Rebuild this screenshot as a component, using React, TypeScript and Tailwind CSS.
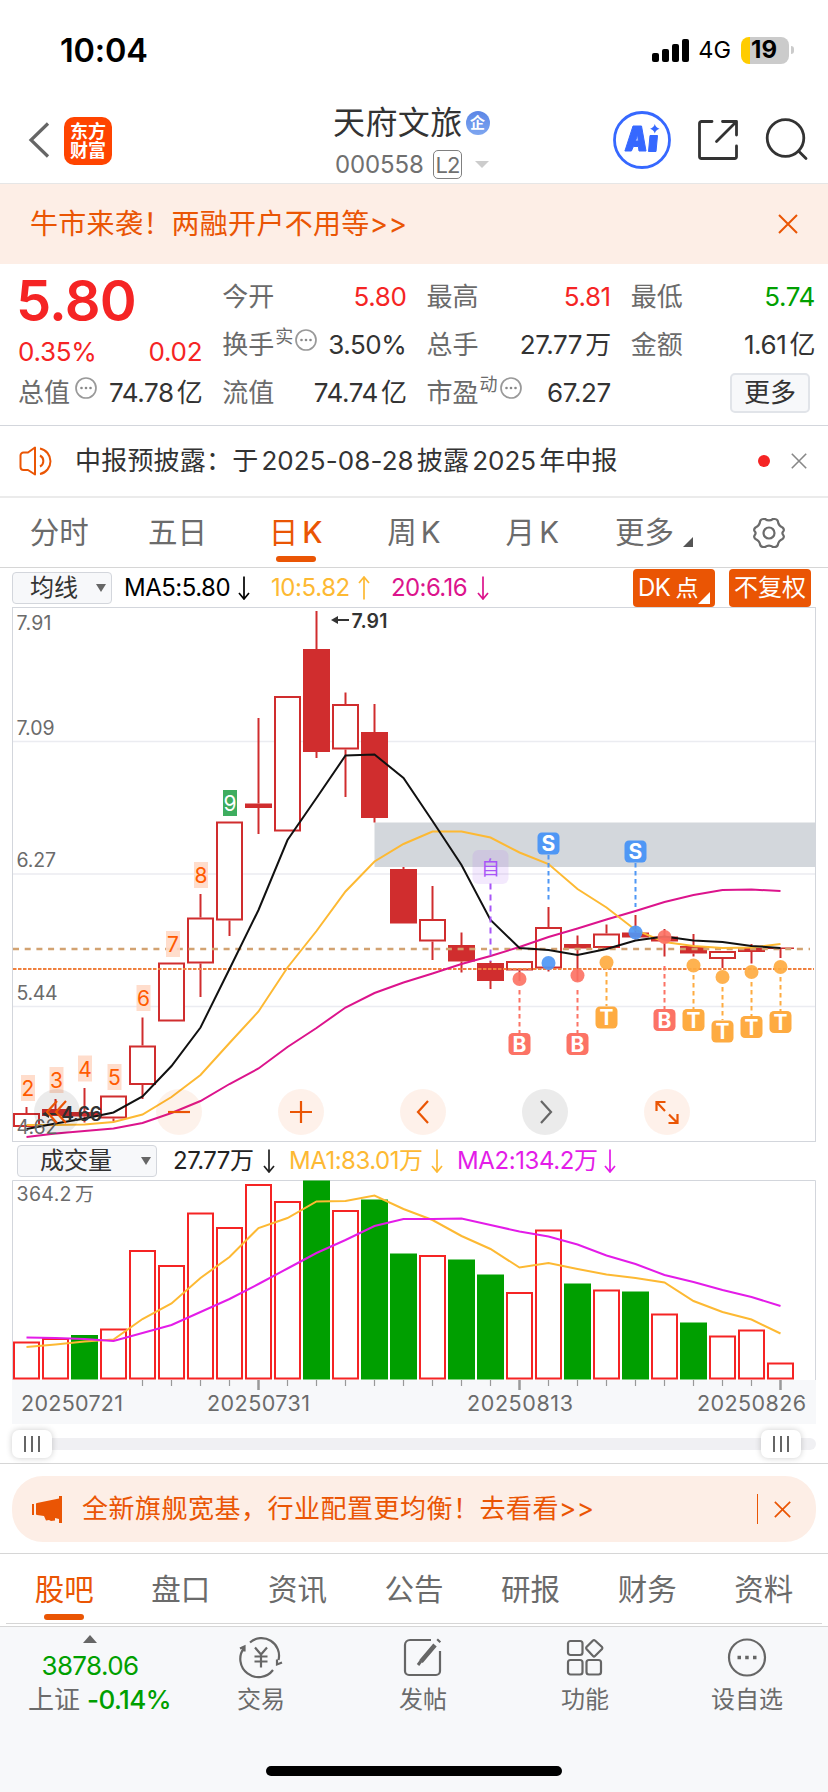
import React from 'react';

type Candle = {
  high: number;
  top: number;
  bottom: number;
  low: number;
  solid?: boolean;
};

const STEP = 29;
const FIRST_X = 14.5;
const xAt = (i: number) => FIRST_X + i * STEP;

// All chart values are in the chart's own pixel space
const candles: Candle[] = [
  { high: 500, top: 506, bottom: 520, low: 520 },
  { high: 492, top: 502, bottom: 509, low: 509, solid: true },
  { high: 481, top: 505, bottom: 509.5, low: 515.5, solid: true },
  { high: 488.5, top: 488.5, bottom: 511.5, low: 514.5 },
  { high: 410.5, top: 438.5, bottom: 478, low: 492 },
  { high: 355.5, top: 355.5, bottom: 414.5, low: 414.5 },
  { high: 287, top: 310.5, bottom: 356.5, low: 390 },
  { high: 214.5, top: 214.5, bottom: 313.5, low: 329 },
  { high: 111, top: 196.5, bottom: 201, low: 227, solid: true },
  { high: 89, top: 89, bottom: 224.5, low: 224.5 },
  { high: 4, top: 42, bottom: 145, low: 151, solid: true },
  { high: 85.5, top: 97, bottom: 142.5, low: 190 },
  { high: 97, top: 125, bottom: 211, low: 215.5, solid: true },
  { high: 260, top: 262, bottom: 316.5, low: 316.5, solid: true },
  { high: 279, top: 312, bottom: 334.5, low: 353 },
  { high: 325.5, top: 338, bottom: 354.5, low: 365.5, solid: true },
  { high: 354, top: 356, bottom: 374, low: 382, solid: true },
  { high: 354, top: 354, bottom: 363.5, low: 374 },
  { high: 300, top: 320, bottom: 361.5, low: 364.5 },
  { high: 328.5, top: 337, bottom: 341.5, low: 374, solid: true },
  { high: 317.5, top: 326.5, bottom: 341, low: 341 },
  { high: 308, top: 325.5, bottom: 330.5, low: 332.5, solid: true },
  { high: 322, top: 329.5, bottom: 334.5, low: 349.5, solid: true },
  { high: 327, top: 339, bottom: 346.5, low: 349.5, solid: true },
  { high: 344, top: 344, bottom: 352, low: 361 },
  { high: 337, top: 341, bottom: 345, low: 356.5, solid: true },
  { high: 340.5, top: 340.5, bottom: 342, low: 351, solid: true },
];

const ma5 = [522, 516.5, 511.5, 505.5, 489.5, 459, 420.5, 362, 303, 233, 191, 148.5, 147.5, 171, 214, 258, 313, 341, 343, 348, 342, 333.5, 329.5, 333.5, 335, 339, 341];
const ma10 = [518, 518, 517.5, 515, 507.5, 490, 468, 436, 404.5, 360.5, 324, 284.5, 254.5, 237, 224.5, 224.5, 230.5, 245.5, 257, 282, 300.5, 323, 335, 339, 341, 340.5, 337];
const ma20 = [530, 526.5, 524, 521.5, 516, 506, 494, 477, 461.5, 440, 421, 400.5, 386, 375.5, 366.5, 357, 349, 340, 330, 321.5, 312.5, 304, 295, 288, 283, 282.5, 284];

const counts = [
  { n: '2', x: 16, y: 468 },
  { n: '3', x: 44.5, y: 460 },
  { n: '4', x: 73, y: 448.5 },
  { n: '5', x: 102.5, y: 457 },
  { n: '6', x: 131.5, y: 378 },
  { n: '7', x: 161, y: 324 },
  { n: '8', x: 189, y: 255 },
  { n: '9', x: 218, y: 183 },
];

const markers = [
  { label: 'S', i: 18, dot: 356, box: 225.5, from: 248, to: 293, color: '#4f97f5' },
  { label: 'S', i: 21, dot: 325.5, box: 233.5, from: 256, to: 300, color: '#4f97f5' },
  { label: 'B', i: 17, dot: 372, box: 426, from: 383, to: 426, color: '#fc7365' },
  { label: 'B', i: 19, dot: 368.5, box: 426, from: 383, to: 426, color: '#fc7365' },
  { label: 'T', i: 20, dot: 355.5, box: 399.5, from: 365, to: 399, color: '#feab41' },
  { label: 'B', i: 22, dot: 330, box: 402, from: 359, to: 402, color: '#fc7365' },
  { label: 'T', i: 23, dot: 358.5, box: 402, from: 368, to: 402, color: '#feab41' },
  { label: 'T', i: 24, dot: 370, box: 413.5, from: 380, to: 413, color: '#feab41' },
  { label: 'T', i: 25, dot: 365, box: 409, from: 375, to: 409, color: '#feab41' },
  { label: 'T', i: 26, dot: 360, box: 404, from: 370, to: 404, color: '#feab41' },
];

const volumes = [
  161.5, 158, 155, 148.5, 70, 85, 32.5, 47, 4, 21, 0.5, 30, 19.5, 73.5, 75, 79.5, 94.5, 112, 49.5, 103.5, 109.5, 111.5, 133.5, 142.5, 155.5, 149.5, 182.5,
];
const greenBars = [2, 10, 12, 13, 15, 16, 19, 21, 23];
const volMa1 = [167, 164.5, 161.5, 159.5, 139, 123.5, 98, 77, 48, 38, 21.5, 21, 15.5, 29, 40, 56, 69, 87.5, 83, 89, 94.5, 98, 102.5, 121, 132, 139.5, 153.5];
const volMa2 = [157.5, 158, 159, 161, 153, 145, 132, 119, 104, 88.5, 73, 60, 46, 39, 39, 38.5, 45, 51.5, 56.5, 64.5, 75.5, 84, 95, 102, 110, 117, 126];

const toPoints = (values: number[]) =>
  values.map((v, i) => `${xAt(i)},${v}`).join(' ');

const periodTabs = ['分时', '五日', '日K', '周K', '月K', '更多'];
const infoTabs = ['股吧', '盘口', '资讯', '公告', '研报', '财务', '资料'];

const StatusBar: React.FC = () => (
  <div className="flex h-[100px] items-start justify-between pt-[33px] pr-[34px] pl-[60px]">
    <span className="text-[32.500px] leading-[35px] font-semibold tracking-[-0.2px] text-black">10:04</span>
    <div className="flex items-center pt-[3px]">
      <svg width="38" height="24" viewBox="0 0 38 24" className="mt-[1px]">
        <rect x="0" y="14" width="7" height="9" rx="2" />
        <rect x="10" y="10" width="7" height="13" rx="2" />
        <rect x="20" y="5" width="7" height="18" rx="2" />
        <rect x="30" y="0" width="7" height="23" rx="2" />
      </svg>
      <span className="ml-[8px] text-[23.500px] leading-7 text-black">4G</span>
      <div className="ml-[10px] flex h-[27px] w-12 items-center justify-center overflow-hidden rounded-[8px] bg-[linear-gradient(90deg,#ffcc00_9px,#cbcbcb_9px)] text-[24px] font-bold text-black">
        <span className="-ml-[2px]">19</span>
      </div>
      <div className="ml-[2px] h-2 w-[3px] rounded-r-full bg-[#cbcbcb]" />
    </div>
  </div>
);

const Header: React.FC = () => (
  <header className="flex h-[84px] items-center border-b border-[#e6e6e6]">
    <div className="flex w-[333px] items-center pl-[28px]">
      <svg width="22" height="36" viewBox="0 0 22 36" fill="none" stroke="#666" strokeWidth="3.2" className="-mt-[3px]">
        <path d="M20 1.5L3 18l17 16.5" />
      </svg>
      <div className="-mt-[2px] ml-[14px] flex h-12 w-12 flex-col items-center justify-center rounded-[10px] bg-[#ff4400] text-[18px] leading-[19px] font-bold text-white">
        <span>东方</span>
        <span>财富</span>
      </div>
    </div>
    <div className="w-[269px]">
      <div className="flex items-center">
        <span className="text-[32px] leading-[38px] tracking-[0.4px] text-[#333]">天府文旅</span>
        <span className="ml-[3px] flex h-6 w-6 items-center justify-center rounded-full bg-linear-to-b from-[#5c86e6] to-[#7ea6f0] text-[15px] leading-none font-bold text-white">
          企
        </span>
      </div>
      <div className="mt-[8px] flex items-center pl-[2px] text-[#707070]">
        <span className="w-[90px] text-[24px] leading-[30px] tracking-[-0.1px]">000558</span>
        <span className="ml-[8px] flex h-[29px] w-[29px] items-center justify-center rounded-[5px] border border-[#808080] text-[22px] leading-none tracking-[-1px]">
          L2
        </span>
        <span className="ml-[13px] border-x-[7px] border-t-[7px] border-x-transparent border-t-[#ccc]" />
      </div>
    </div>
    <div className="flex flex-1 items-center pl-[10px]">
      <svg width="60" height="60" viewBox="0 0 60 60" className="-mt-1">
        <circle cx="30" cy="30" r="27.5" fill="none" stroke="#3668ff" strokeWidth="2.8" />
        <path
          fill="#3668ff"
          fillRule="evenodd"
          stroke="#3668ff"
          strokeWidth="1"
          strokeLinejoin="round"
          d="M21 16h8.500l4.500 25h-7l-.6-4.500h-5l-2 4.500h-6.500zM23.600 31h2.600l-.6-6.500zM38 25.500h7.500l-1.500 16h-7.500z"
        />
        <path fill="#3668ff" d="M42.800 14q1 3.700 4.700 4.800-3.700 1.100-4.700 4.800-1-3.700-4.700-4.800 3.700-1.100 4.700-4.800z" />
      </svg>
      <svg width="42" height="42" viewBox="0 0 42 42" fill="none" stroke="#333" strokeWidth="2.800" strokeLinecap="round" strokeLinejoin="round" className="-mt-1 ml-[25px]">
        <path d="M15 2.500H4.500a2 2 0 0 0-2 2v33a2 2 0 0 0 2 2h33a2 2 0 0 0 2-2V27" />
        <path d="M25.500 2.500h14V16M39 3L19.500 22.500" />
      </svg>
      <svg width="44" height="44" viewBox="0 0 44 44" fill="none" stroke="#333" strokeWidth="2.800" strokeLinecap="round" className="-mt-1 ml-[26px]">
        <circle cx="20.500" cy="20" r="18.300" />
        <path d="M33.500 33l7.500 7.500" />
      </svg>
    </div>
  </header>
);

const CloseIcon: React.FC<{ size: number; color: string; width?: number }> = ({ size, color, width = 2 }) => (
  <svg width={size} height={size} viewBox="0 0 20 20" fill="none" stroke={color} strokeWidth={width}>
    <path d="M1 1l18 18M19 1L1 19" />
  </svg>
);

const Dots: React.FC = () => (
  <svg width="22" height="22" viewBox="0 0 22 22" className="-mt-[10px]">
    <circle cx="11" cy="11" r="10" fill="none" stroke="#999" strokeWidth="1.700" />
    <circle cx="6.500" cy="11" r="1.300" fill="#888" />
    <circle cx="11" cy="11" r="1.300" fill="#888" />
    <circle cx="15.500" cy="11" r="1.300" fill="#888" />
  </svg>
);

const Cell: React.FC<{ label: string; sup?: string; dots?: boolean; value?: string; color?: string; unit?: string }> = ({
  label,
  sup,
  dots,
  value,
  color = 'text-[#333]',
  unit,
}) => (
  <div className="flex h-12 items-center justify-between whitespace-nowrap">
    <div className="flex items-center text-[26px] leading-none text-[#6b6b6b]">
      <span>{label}</span>
      {sup && <span className="-mt-4 ml-[1px] text-[18px]">{sup}</span>}
      {dots && <span className={sup ? 'ml-[2px]' : 'ml-[5px]'}><Dots /></span>}
    </div>
    <div className={`flex items-center text-[26px] leading-none tracking-[-0.4px] ${color}`}>
      {value}
      {unit && <span className="ml-[3px]">{unit}</span>}
    </div>
  </div>
);

const Quote: React.FC = () => (
  <section className="grid h-[162px] grid-cols-4 gap-x-5 border-b border-[#d3d6dc] pt-[9px] pr-[13px] pl-[18px]">
    <div>
      <div className="-ml-[2px] flex h-[55px] items-center text-[56px] leading-none font-semibold tracking-[-0.8px] text-[#f52424]">5.80</div>
      <div className="flex h-[41px] items-center justify-between pt-[7px] text-[26px] leading-none tracking-[-0.3px] text-[#f52424]">
        <span>0.35%</span>
        <span>0.02</span>
      </div>
      <Cell label="总值" dots value="74.78" unit="亿" />
    </div>
    <div>
      <Cell label="今开" value="5.80" color="text-[#f52424]" />
      <Cell label="换手" sup="实" dots value="3.50%" />
      <Cell label="流值" value="74.74" unit="亿" />
    </div>
    <div>
      <Cell label="最高" value="5.81" color="text-[#f52424]" />
      <Cell label="总手" value="27.77" unit="万" />
      <Cell label="市盈" sup="动" dots value="67.27" />
    </div>
    <div>
      <Cell label="最低" value="5.74" color="text-[#009f00]" />
      <Cell label="金额" value="1.61" unit="亿" />
      <div className="flex h-12 items-center justify-end pr-[5px]">
        <button className="h-10 w-20 rounded-[5px] border-2 border-[#e1e4e9] bg-[#f7f8fa] text-[26px] leading-none text-[#333]">更多</button>
      </div>
    </div>
  </section>
);

const Notice: React.FC = () => (
  <div className="flex h-[72px] items-center border-b-2 border-[#ebebeb] pr-[21px] pl-[19px]">
    <svg width="36" height="30" viewBox="0 0 36 30" fill="none" stroke="#ea5504" strokeWidth="2" strokeLinejoin="round">
      <path d="M16 1.500v27l-7-4.500H4.500a3 3 0 0 1-3-3V9.500a3 3 0 0 1 3-3H9z" />
      <path d="M21 9.500a6.200 6.200 0 0 1 0 11M21 2.500a13 13 0 0 1 0 25.500" />
    </svg>
    <span className="ml-5 flex-1 text-[26px] leading-none tracking-[0.2px] whitespace-nowrap text-[#333]">
      中报预披露：于<span className="ml-[3px] tracking-[0.1px]">2025-08-28</span>
      <span className="ml-[3px]">披露</span>
      <span className="ml-[3px] tracking-[0px]">2025</span>
      <span className="ml-[3px]">年中报</span>
    </span>
    <span className="mr-[21px] h-3 w-3 rounded-full bg-[#f52424]" />
    <CloseIcon size={16} color="#888" />
  </div>
);

const PeriodTabs: React.FC = () => (
  <nav className="grid h-[70px] grid-cols-7 border-b border-[#d6d6d6] text-[29.500px] text-[#6b6b6b]">
    {periodTabs.map((tab) => {
      const active = tab === '日K';
      return (
        <div key={tab} className={`relative flex items-center justify-center leading-none ${active ? 'text-[#ea5504]' : ''}`}>
          <span className={tab === '更多' ? '-ml-3' : ''}>{tab.replace('K', '')}</span>
          {tab.endsWith('K') && <span className={`ml-[4px] ${active ? 'font-medium' : ''}`}>K</span>}
          {tab === '更多' && (
            <svg width="10" height="10" viewBox="0 0 10 10" className="absolute right-[17px] bottom-[20px]" fill="#555">
              <path d="M10 0v10H0z" />
            </svg>
          )}
          {active && <span className="absolute bottom-[5px] h-[6px] w-10 rounded-full bg-[#ea5504]" />}
        </div>
      );
    })}
    <div className="flex items-center justify-center">
      <svg width="34" height="32" viewBox="0 0 34 32" fill="none" stroke="#6b6b6b" strokeWidth="2.200" strokeLinejoin="round">
        <path d="M11.500 2h1.500q4 2.800 8 0h1.500q2.500 0 3.300 2 .6 4.600 4.700 6.500 2 1.500 1 3.500-2.200 2 0 4.500 1 2-1 3.500-4.100 1.900-4.700 6-.8 2-3.300 2h-1.500q-4-2.800-8 0h-1.500q-2.500 0-3.300-2-.6-4.100-4.700-6-2-1.500-1-3.500 2.200-2.500 0-4.500-1-2 1-3.500 4.100-1.900 4.700-6.500.8-2 3.300-2z" />
        <circle cx="17" cy="16" r="5.500" />
      </svg>
    </div>
  </nav>
);

const Arrow: React.FC<{ up?: boolean }> = ({ up }) => (
  <svg width="12" height="24" viewBox="0 0 12 24" fill="none" stroke="currentColor" strokeWidth="1.700" className="ml-[7px] shrink-0">
    <path d={up ? 'M6 23.500V1M1 7l5-6 5 6' : 'M6 .5V23M1 17l5 6 5-6'} />
  </svg>
);

const Caret: React.FC = () => (
  <span className="border-x-[5px] border-t-[8px] border-x-transparent border-t-[#666]" />
);

const IndicatorBar: React.FC = () => (
  <div className="flex h-[39px] items-center pr-[17px] pl-3 text-[24px] leading-none whitespace-nowrap">
    <div className="flex h-8 w-[100px] items-center justify-between rounded-[4px] border border-[#d3d6dc] bg-[#f7f8fa] pr-[5px] pl-[17px] text-[#333]">
      均线
      <Caret />
    </div>
    <div className="ml-3 flex w-[147px] items-center text-black">
      <span className="w-[107px] tracking-[-0.5px]">MA5:5.80</span>
      <Arrow />
    </div>
    <div className="flex w-[120px] items-center text-[#fdb933]">
      <span className="w-[80px] tracking-[-0.4px]">10:5.82</span>
      <Arrow up />
    </div>
    <div className="flex flex-1 items-center text-[#dc148c]">
      <span className="w-[79px] tracking-[-0.6px]">20:6.16</span>
      <Arrow />
    </div>
    <button className="relative h-[38px] w-[82px] rounded-[4px] bg-[#ea5504] pl-[5px] text-left text-white">
      <span className="tracking-[-0.5px]">DK</span>
      <span className="ml-[5px] text-[23px]">点</span>
      <svg width="12" height="12" viewBox="0 0 12 12" className="absolute right-[5px] bottom-[3px]" fill="#fff">
        <path d="M12 0v12H0z" />
      </svg>
    </button>
    <button className="ml-[14px] h-[38px] w-[82px] rounded-[4px] bg-[#ea5504] text-white">不复权</button>
  </div>
);

const CandleShape: React.FC<{ candle: Candle; x: number }> = ({ candle: c, x }) => (
  <g stroke="#d02d2e" strokeWidth="2">
    {c.high < c.top && <path d={`M${x} ${c.high}V${c.top}`} />}
    {c.low > c.bottom && <path d={`M${x} ${c.bottom}V${c.low}`} />}
    {c.solid ? (
      <rect x={x - 13.5} y={c.top} width="27" height={c.bottom - c.top} fill="#d02d2e" stroke="none" />
    ) : (
      <rect x={x - 12.5} y={c.top + 1} width="25" height={c.bottom - c.top - 2} fill="#fff" />
    )}
  </g>
);

const priceLabels = [
  { text: '7.91', y: 23, w: 35 },
  { text: '7.09', y: 127.5, w: 38 },
  { text: '6.27', y: 260, w: 39.5 },
  { text: '5.44', y: 393, w: 41 },
  { text: '4.62', y: 527, w: 41 },
];

const ChartButton: React.FC<{ muted?: string; d: string; stroke?: string }> = ({ muted, d, stroke = '#ea5504' }) => (
  <button className={`flex h-[46px] w-[46px] items-center justify-center rounded-full ${muted ?? 'bg-[#fef0e8]/90'}`}>
    <svg width="26" height="26" viewBox="0 0 26 26" fill="none" stroke={stroke} strokeWidth="2.200">
      <path d={d} />
    </svg>
  </button>
);

const PriceChart: React.FC = () => (
  <div className="relative mx-3 h-[535px]">
    <svg width="804" height="535" viewBox="0 0 804 535" fill="none">
      <path d="M.5 134.500h803M.5 267h803M.5 399.500h803" stroke="#ebecf1" strokeWidth="1.300" />
      <rect x="362.500" y="215.500" width="440.500" height="44.500" fill="#d3d7dc" />
      <rect x=".5" y=".5" width="803" height="534" stroke="#d3d6dc" />

      {candles.map((candle, i) => (
        <CandleShape key={i} candle={candle} x={xAt(i)} />
      ))}

      <path d="M1 342h797" stroke="#d2a271" strokeWidth="2.400" strokeDasharray="6 5.700" />
      <path d="M1 362h801" stroke="#f0813e" strokeWidth="1.800" strokeDasharray="3.500 1.500" />

      <polyline points={toPoints(ma20)} stroke="#dc148c" strokeWidth="2" />
      <polyline points={toPoints(ma10)} stroke="#fdb933" strokeWidth="2" />
      <polyline points={toPoints(ma5)} stroke="#111" strokeWidth="2" />

      {/* Nine-count sequence above the candles */}
      {counts.map(({ n, x, y }) => (
        <g key={n}>
          <rect x={x - 7} y={y} width="14" height="26" fill={n === '9' ? '#3ead5f' : '#ffd9c6'} fillOpacity={n === '9' ? 1 : 0.9} />
          <text x={x} y={y + 21} textAnchor="middle" fontSize="21" fill={n === '9' ? '#fff' : '#ff5a00'}>
            {n}
          </text>
        </g>
      ))}

      {/* Watchlist entry day */}
      <path d="M478.500 276.500v78" stroke="#a855f7" strokeWidth="2" strokeDasharray="6 5" />
      <rect x="460.500" y="243" width="36" height="34" rx="6" fill="#b478f5" fillOpacity=".16" />
      <text x="478.500" y="267.500" textAnchor="middle" fontSize="19" fill="#a855f7">自</text>

      {markers.map(({ label, i, dot, box, from, to, color }) => (
        <g key={i}>
          <path d={`M${xAt(i)} ${from}V${to}`} stroke={color} strokeWidth="2" strokeDasharray="4.500 3.500" />
          <circle cx={xAt(i)} cy={dot} r="7" fill={color} fillOpacity=".92" />
          <rect x={xAt(i) - 11} y={box} width="22" height="22" rx="4.500" fill={color} />
          <text x={xAt(i)} y={box + 18.5} textAnchor="middle" fontSize="21" fontWeight="700" fill="#fff">
            {label}
          </text>
        </g>
      ))}

      {priceLabels.map(({ text, y, w }) => (
        <text key={text} x="4.500" y={y} fontSize="19.500" textLength={w} fill="#6b6b6b">
          {text}
        </text>
      ))}

      <path d="M337 13h-13" stroke="#333" strokeWidth="2" />
      <path d="M319 13l7-4v8z" fill="#333" />
      <text x="339.500" y="20.500" fontSize="19.500" fontWeight="600" textLength="36" fill="#333">7.91</text>
      <path d="M47 507h-12" stroke="#333" strokeWidth="2" />
      <path d="M30 507l7-4v8z" fill="#333" />
      <text x="49" y="514" fontSize="19.500" fontWeight="600" textLength="41" fill="#333">4.66</text>
    </svg>
    <div className="absolute bottom-[7px] left-[22px] flex gap-[76px]">
      <ChartButton muted="bg-black/8" d="M13 2L3 13l10 11M22 2L12 13l10 11" />
      <ChartButton muted="bg-[#ea5504]/8" d="M2 13h22" />
      <ChartButton d="M2 13h22M13 2v22" />
      <ChartButton d="M18 2L8 13l10 11" />
      <ChartButton muted="bg-[#ebebeb]" stroke="#666" d="M9 2l10 11L9 24" />
      <ChartButton d="M2.500 12V3h9M2.500 3l8.500 9M23.500 15v9h-9M23.500 24L15 15.500" />
    </div>
  </div>
);

const VolumeBar: React.FC = () => (
  <div className="flex h-[38px] items-center pl-[17px] text-[24px] leading-none whitespace-nowrap">
    <div className="flex h-8 w-[140px] items-center justify-between rounded-[4px] border border-[#d3d6dc] bg-[#f7f8fa] pr-[5px] pl-[22px] text-[#333]">
      成交量
      <Caret />
    </div>
    <div className="ml-[16px] flex w-[116px] items-center text-[#222]">
      <span className="w-[83px] tracking-[-0.5px]">27.77万</span>
      <Arrow />
    </div>
    <div className="flex w-[168px] items-center text-[#fdb933]">
      <span className="w-[135px] tracking-[-0.5px]">MA1:83.01万</span>
      <Arrow />
    </div>
    <div className="flex items-center text-[#e31ce8]">
      <span className="w-[140px] tracking-[-0.4px]">MA2:134.2万</span>
      <Arrow />
    </div>
  </div>
);

const dates = [
  { text: '20250721', x: 9, w: 102 },
  { text: '20250731', x: 195, w: 103 },
  { text: '20250813', x: 455, w: 106 },
  { text: '20250826', x: 685, w: 109 },
];

const VolumeChart: React.FC = () => (
  <svg width="804" height="244" viewBox="0 0 804 244" fill="none" className="mx-3">
    <path d="M.5 200V.5h803V200" stroke="#d3d6dc" />
    <rect x="0" y="200" width="804" height="44" fill="#f7f8fa" />
    {volumes.map((top, i) =>
      greenBars.includes(i) ? (
        <rect key={i} x={xAt(i) - 13.5} y={top} width="27" height={199.5 - top} fill="#009f00" />
      ) : (
        <rect key={i} x={xAt(i) - 12.5} y={top + 1} width="25" height={197.5 - top} fill="#fff" stroke="#f52424" strokeWidth="2" />
      ),
    )}
    {volumes.map((_, i) => {
      if (i < 4) return null;
      const major = i % 9 === 8;
      return <path key={i} d={`M${xAt(i)} 200v${major ? 10 : 6}`} stroke="#999" strokeWidth={major ? 2.5 : 1.2} />;
    })}
    <polyline points={toPoints(volMa1)} stroke="#fdb933" strokeWidth="2" />
    <polyline points={toPoints(volMa2)} stroke="#e31ce8" strokeWidth="2" />
    <text x="4.500" y="21" fontSize="19.500" textLength="55" fill="#6b6b6b">364.2</text>
    <text x="63" y="21" fontSize="19" fill="#6b6b6b">万</text>
    {dates.map(({ text, x, w }) => (
      <text key={text} x={x} y="230.500" fontSize="21.500" textLength={w} fill="#6b6b6b">
        {text}
      </text>
    ))}
  </svg>
);

const Handle: React.FC = () => (
  <div className="flex h-7 w-10 items-center justify-center gap-[5px] rounded-[7px] bg-white shadow-[0_0_6px_rgba(0,0,0,0.2)]">
    <span className="h-4 w-[2px] bg-[#666]" />
    <span className="h-4 w-[2px] bg-[#666]" />
    <span className="h-4 w-[2px] bg-[#666]" />
  </div>
);

const RangeSlider: React.FC = () => (
  <div className="h-[40px] border-b border-[#d6d6d6] px-3 pt-[14px]">
    <div className="flex h-3 items-center justify-between rounded-full bg-[#f0f0f3] pr-[15px]">
      <Handle />
      <Handle />
    </div>
  </div>
);

const PromoBar: React.FC = () => (
  <div className="h-[90px] border-b border-[#d6d6d6] px-3 pt-3">
    <div className="flex h-[66px] items-center rounded-[31px] bg-[#fdeee6] pr-[25px] pl-5 text-[#ea5504]">
      <svg width="30" height="27" viewBox="0 0 30 27" fill="#ea5504">
        <path d="M0 8h2v11H0zM4 8q0-1 1-1L27 2.500V0h3v27h-3v-4l-4-1v2.500l-4 .5-2-1-3 .5-2-4.500L5 19q-1 0-1-1z" />
      </svg>
      <span className="ml-5 flex-1 text-[26px] leading-none tracking-[0.5px] whitespace-nowrap">
        全新旗舰宽基，行业配置更均衡！去看看&gt;&gt;
      </span>
      <span className="mr-4 h-[30px] w-px bg-[#ea5504]" />
      <CloseIcon size={17} color="#ea5504" />
    </div>
  </div>
);

const InfoTabs: React.FC = () => (
  <nav className="mx-[6px] grid h-[70px] grid-cols-7 border-b border-[#d6d6d6] text-[29.500px] leading-none text-[#6b6b6b]">
    {infoTabs.map((tab, i) => (
      <div key={tab} className={`relative flex items-center justify-center pt-[2px] ${i === 0 ? 'text-[#ea5504]' : ''}`}>
        {tab}
        {i === 0 && <span className="absolute bottom-[3px] h-[6px] w-10 rounded-full bg-[#ea5504]" />}
      </div>
    ))}
  </nav>
);

const actions = [
  {
    label: '交易',
    icon: (
      <>
        <path d="M11 6.500a17.500 17.500 0 0 1 28.500 17.500M34 34A17.500 17.500 0 0 1 5 12M1 12.500l4.500-2v5M43 26.500l-5 2v-5" />
        <path d="M16 11.500l6 7 6-7M22 18.500v13M15.500 20.500h13M15.500 25.500h13" />
      </>
    ),
  },
  {
    label: '发帖',
    icon: (
      <>
        <path d="M30 4H9a5 5 0 0 0-5 5v26a4 4 0 0 0 4 4h27a4 4 0 0 0 4-4V15" />
        <path d="M34 9L20 25.500M37 5.500l1.500-1.500" strokeWidth="4.500" />
        <path d="M20 25l-3 4" strokeWidth="3" />
      </>
    ),
  },
  {
    label: '功能',
    icon: (
      <>
        <rect x="5" y="5" width="14.500" height="14" rx="2.500" />
        <rect x="5" y="24" width="14.500" height="14.500" rx="2.500" />
        <rect x="23.500" y="24" width="14.500" height="14.500" rx="2.500" />
        <path d="M30 4.500q1-1 2 0l7 6.500q.8 1 0 2l-7 7q-1 1-2 0l-6.500-7q-.8-1 0-2z" />
      </>
    ),
  },
  {
    label: '设自选',
    icon: (
      <>
        <circle cx="22" cy="21.500" r="18" />
        <path d="M12.500 21.500h3.500M20.200 21.500h3.500M28 21.500h3.500" strokeWidth="3.500" />
      </>
    ),
  },
];

const BottomBar: React.FC = () => (
  <footer className="mt-[2px] flex flex-1 flex-col border-t border-[#d6d6d6] bg-[#f7f8fa]">
    <div className="flex h-[95px]">
      <div className="flex w-[180px] flex-col items-center pt-2 text-[26px] leading-none whitespace-nowrap text-[#009f00]">
        <span className="border-x-[7px] border-b-[8px] border-x-transparent border-b-[#666]" />
        <span className="mt-[10px] tracking-[-0.6px]">3878.06</span>
        <div className="mt-[8px] ml-[19px]">
          <span className="text-[#6b6b6b]">上证</span>
          <span className="ml-[7px] font-medium tracking-[-0.6px]">-0.14%</span>
        </div>
      </div>
      {actions.map(({ label, icon }) => (
        <div key={label} className="flex w-[162px] flex-col items-center pt-[9px] text-[#6b6b6b]">
          <svg width="44" height="44" viewBox="0 0 44 44" fill="none" stroke="#666" strokeWidth="2.200">
            {icon}
          </svg>
          <span className="mt-2 text-[24px] leading-none">{label}</span>
        </div>
      ))}
    </div>
    <div className="mt-auto mb-4 h-[10px] w-[296px] self-center rounded-full bg-black" />
  </footer>
);

const App: React.FC = () => {
  return (
    <div className="flex h-[1792px] w-[828px] flex-col overflow-hidden bg-white font-['Inter','Noto_Sans_CJK_SC',sans-serif]">
      <StatusBar />
      <Header />
      <div className="flex h-20 items-center justify-between bg-[#fdeee6] pr-[30px] pl-[30px] text-[#ea5504]">
        <span className="text-[28px] leading-none tracking-[0.3px]">牛市来袭！两融开户不用等&gt;&gt;</span>
        <CloseIcon size={20} color="#ea5504" />
      </div>
      <Quote />
      <Notice />
      <PeriodTabs />
      <IndicatorBar />
      <PriceChart />
      <VolumeBar />
      <VolumeChart />
      <RangeSlider />
      <PromoBar />
      <InfoTabs />
      <BottomBar />
    </div>
  );
};

export default App;
